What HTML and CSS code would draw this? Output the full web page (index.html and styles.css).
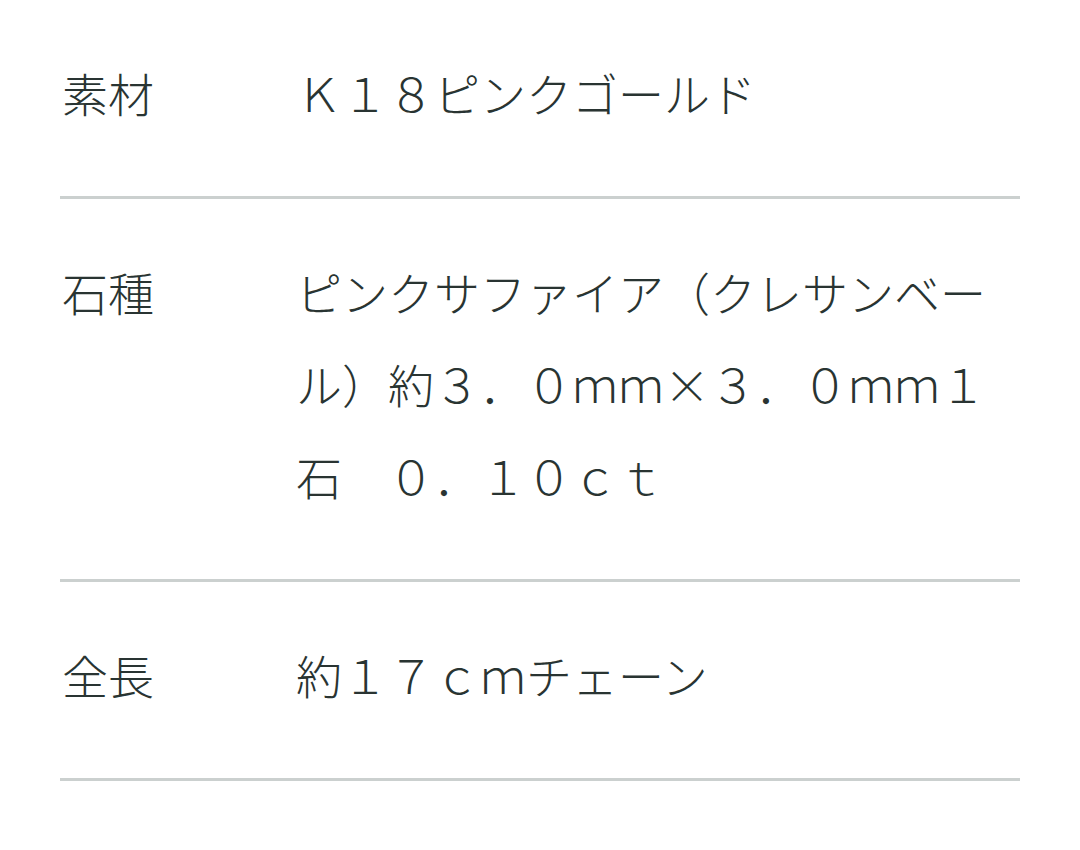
FILE: index.html
```html
<!DOCTYPE html>
<html lang="ja">
<head>
<meta charset="utf-8">
<title>商品仕様</title>
<link rel="stylesheet" href="styles.css">
</head>
<body>
<dl class="spec">
  <div class="spec-row">
    <dt class="spec-label">素材</dt>
    <dd class="spec-value">Ｋ１８ピンクゴールド</dd>
  </div>
  <div class="spec-row">
    <dt class="spec-label">石種</dt>
    <dd class="spec-value">ピンクサファイア（クレサンベール）約３．０ｍｍ×３．０ｍｍ１石　０．１０ｃｔ</dd>
  </div>
  <div class="spec-row">
    <dt class="spec-label">全長</dt>
    <dd class="spec-value">約１７ｃｍチェーン</dd>
  </div>
</dl>
</body>
</html>
```
FILE: styles.css
```css
html, body {
  margin: 0;
  padding: 0;
  background: #ffffff;
}

body {
  font-family: "Noto Sans CJK JP", "Noto Sans", sans-serif;
  font-weight: 300;
  color: #293432;
}

.spec {
  margin: 0 60px;
  padding: 0;
}

.spec-row {
  display: grid;
  grid-template-columns: 236px 1fr;
  padding: 46px 0 58px;
  border-bottom: 3px solid #cbd0cf;
}

.spec-label,
.spec-value {
  margin: 0;
  font-size: 46px;
  line-height: 92px;
}

.spec-label {
  padding-left: 2px;
}

.spec-value {
  line-break: strict;
}
```
